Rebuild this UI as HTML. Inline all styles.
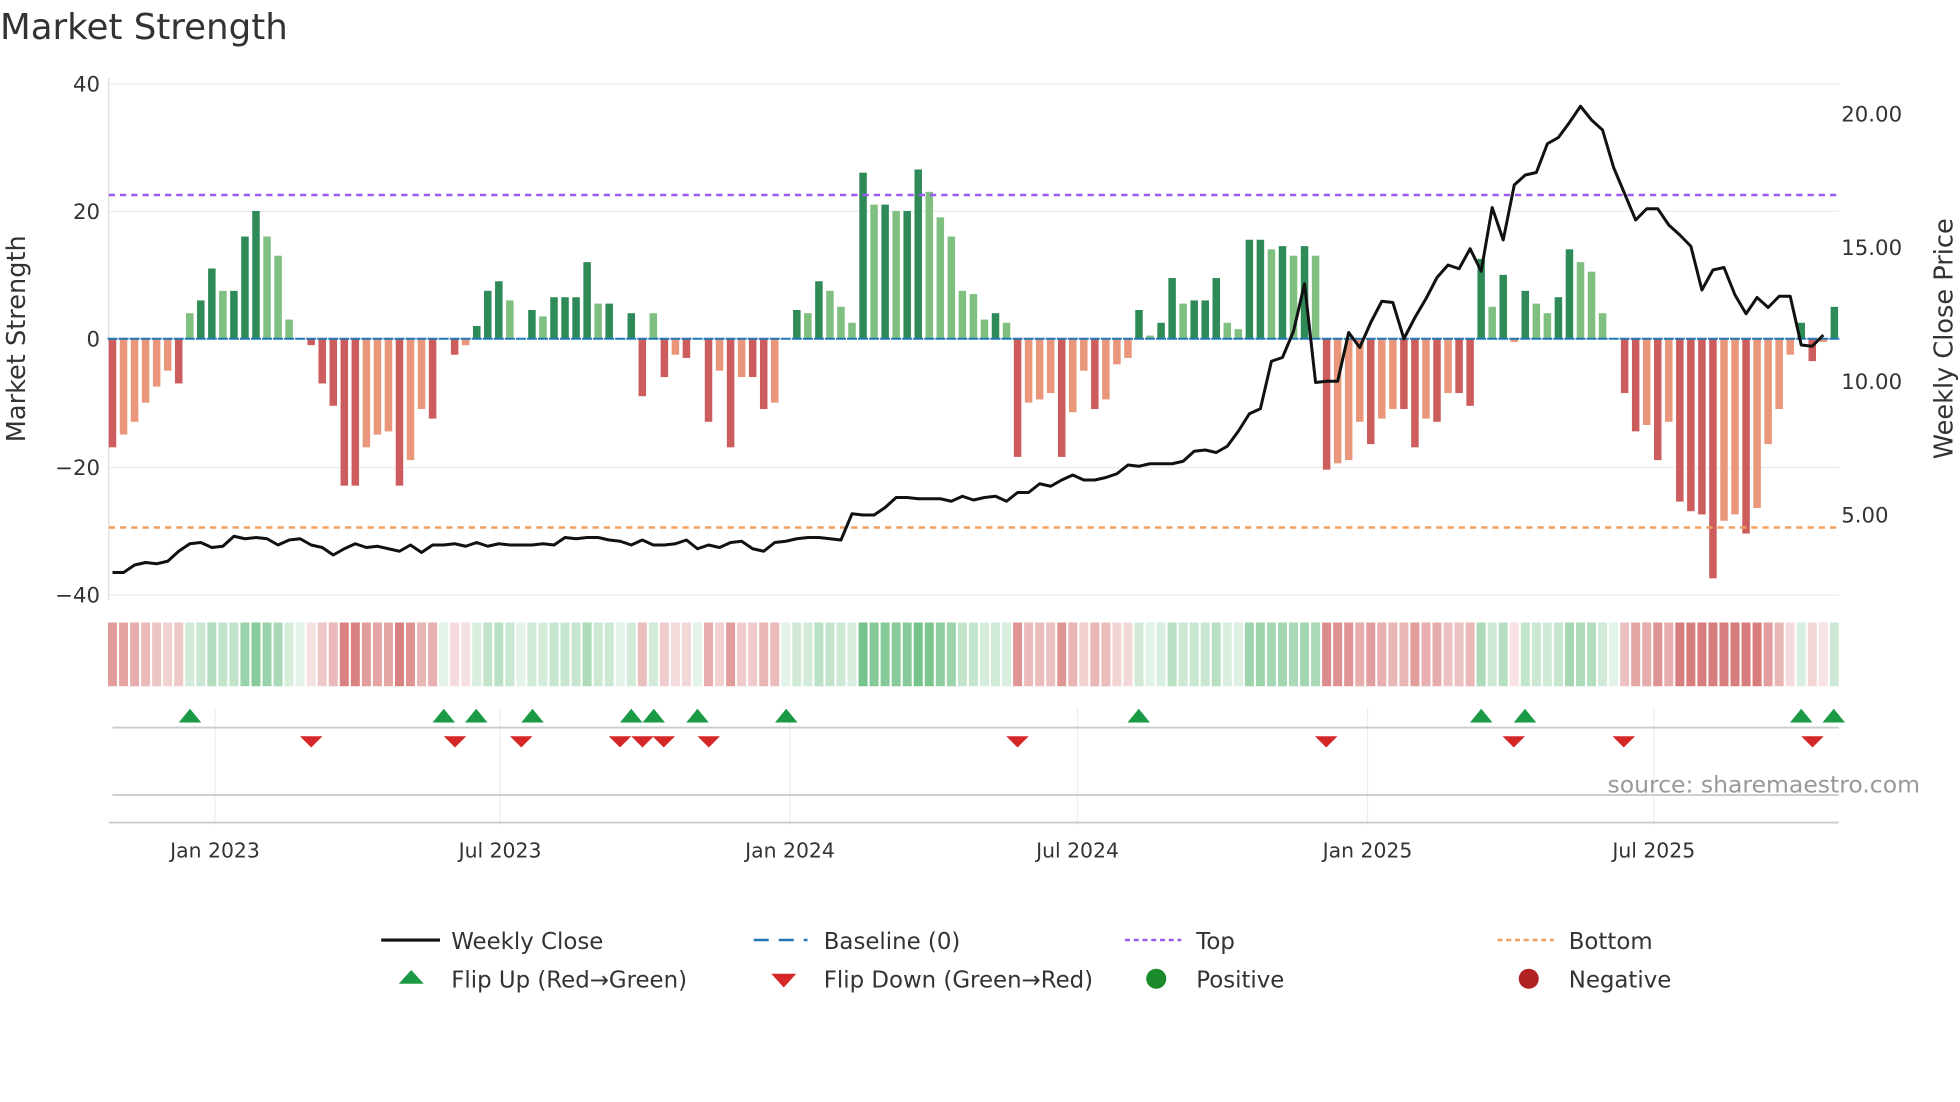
<!DOCTYPE html>
<html><head><meta charset="utf-8"><style>
html,body{margin:0;padding:0;background:#fff;width:1960px;height:1102px;overflow:hidden}
svg{display:block}
text{font-family:"DejaVu Sans","Liberation Sans",sans-serif}
</style></head><body>
<svg id="s" width="1960" height="1102" viewBox="0 0 1568 881.6" xmlns="http://www.w3.org/2000/svg">
<text x="0" y="31" font-size="28.5" fill="#333">Market Strength</text>
<g stroke="#ececec" stroke-width="1">
<line x1="87" y1="67" x2="1471" y2="67"/><line x1="87" y1="169" x2="1471" y2="169"/>
<line x1="87" y1="374" x2="1471" y2="374"/><line x1="87" y1="476" x2="1471" y2="476"/>
</g>
<line x1="87" y1="62" x2="87" y2="480" stroke="#ddd"/>
<g font-size="17" fill="#333" text-anchor="end">
<text x="80" y="73">40</text><text x="80" y="175">20</text><text x="80" y="277">0</text>
<text x="80" y="380">−20</text><text x="80" y="482">−40</text>
</g>
<g font-size="17" fill="#333">
<text x="1473" y="97">20.00</text><text x="1473" y="204">15.00</text>
<text x="1473" y="311">10.00</text><text x="1473" y="418">5.00</text>
</g>
<text transform="translate(20,271) rotate(-90)" font-size="20.5" fill="#333" text-anchor="middle">Market Strength</text>
<text transform="translate(1562,271) rotate(-90)" font-size="20.5" fill="#333" text-anchor="middle">Weekly Close Price</text>
<g id="bars"></g>
<line x1="87" y1="156" x2="1471" y2="156" stroke="#9a5cf0" stroke-width="2" stroke-dasharray="5,4"/>
<line x1="87" y1="422" x2="1471" y2="422" stroke="#f0a060" stroke-width="2" stroke-dasharray="5,4"/>
<polyline id="price" fill="none" stroke="#111" stroke-width="2.4" stroke-linejoin="round"/>
<g id="heat"></g>
<g stroke="#eee"><line x1="172" y1="566" x2="172" y2="660"/><line x1="400" y1="566" x2="400" y2="660"/><line x1="632" y1="566" x2="632" y2="660"/><line x1="862" y1="566" x2="862" y2="660"/><line x1="1094" y1="566" x2="1094" y2="660"/><line x1="1323" y1="566" x2="1323" y2="660"/></g>
<line x1="90" y1="582" x2="1471" y2="582" stroke="#ccc" stroke-width="1.5"/>
<line x1="90" y1="636" x2="1471" y2="636" stroke="#ccc" stroke-width="1.5"/>
<line x1="87" y1="658" x2="1471" y2="658" stroke="#ccc" stroke-width="1.5"/>
<g id="flips"></g>
<text x="1536" y="634" font-size="18.8" fill="#999" text-anchor="end">source: sharemaestro.com</text>
<g font-size="16.3" fill="#333" text-anchor="middle">
<text x="172" y="686">Jan 2023</text><text x="400" y="686">Jul 2023</text><text x="632" y="686">Jan 2024</text>
<text x="862" y="686">Jul 2024</text><text x="1094" y="686">Jan 2025</text><text x="1323" y="686">Jul 2025</text>
</g>
<g font-size="18.3" fill="#333">
<line x1="305" y1="752" x2="352" y2="752" stroke="#111" stroke-width="2.5"/><text x="361" y="759">Weekly Close</text>
<line x1="603" y1="752" x2="646" y2="752" stroke="#1f77b4" stroke-width="2" stroke-dasharray="12,8"/><text x="659" y="759">Baseline (0)</text>
<line x1="900" y1="752" x2="945" y2="752" stroke="#9a5cf0" stroke-width="2" stroke-dasharray="4,3"/><text x="957" y="759">Top</text>
<line x1="1198" y1="752" x2="1243" y2="752" stroke="#f0a060" stroke-width="2" stroke-dasharray="4,3"/><text x="1255" y="759">Bottom</text>
<polygon points="319,787 329,776 339,787" fill="#1a9a45"/><text x="361" y="790">Flip Up (Red→Green)</text>
<polygon points="617,779 627,790 637,779" fill="#d62728"/><text x="659" y="790">Flip Down (Green→Red)</text>
<circle cx="925" cy="783" r="8" fill="#1a8a2a"/><text x="957" y="790">Positive</text>
<circle cx="1223" cy="783" r="8" fill="#b22222"/><text x="1255" y="790">Negative</text>
</g>
</svg>
<script>
var v=[-17,-15,-13,-10,-7.5,-5,-7,4,6,11,7.5,7.5,16,20,16,13,3,0,-1,-7,-10.5,-23,-23,-17,-15,-14.5,-23,-19,-11,-12.5,0,-2.5,-1,2,7.5,9,6,0,4.5,3.5,6.5,6.5,6.5,12,5.5,5.5,0,4,-9,4,-6,-2.5,-3,0,-13,-5,-17,-6,-6,-11,-10,0,4.5,4,9,7.5,5,2.5,26,21,21,20,20,26.5,23,19,16,7.5,7,3,4,2.5,-18.5,-10,-9.5,-8.5,-18.5,-11.5,-5,-11,-9.5,-4,-3,4.5,0.5,2.5,9.5,5.5,6,6,9.5,2.5,1.5,15.5,15.5,14,14.5,13,14.5,13,-20.5,-19.5,-19,-13,-16.5,-12.5,-11,-11,-17,-12.5,-13,-8.5,-8.5,-10.5,12.5,5,10,-0.5,7.5,5.5,4,6.5,14,12,10.5,4,0,-8.5,-14.5,-13.5,-19,-13,-25.5,-27,-27.5,-37.5,-28.5,-27.5,-30.5,-26.5,-16.5,-11,-2.5,2.5,-3.5,-0.5,5];
var p=[458,458,452,450,451,449,441,435,434,438,437,429,431,430,431,436,432,431,436,438,444,439,435,438,437,439,441,436,442,436,436,435,437,434,437,435,436,436,436,435,436,430,431,430,430,432,433,436,432,436,436,435,432,439,436,438,434,433,439,441,434,433,431,430,430,431,432,411,412,412,406,398,398,399,399,399,401,397,400,398,397,401,394,394,387,389,384,380,384,384,382,379,372,373,371,371,371,369,361,360,362,357,345,331,327,289,286,265,227,306,305,305,266,278,258,241,242,271,254,239,222,212,215,199,217,166,192,148,140,138,115,110,98,85,96,104,134,155,176,167,167,180,188,197,232,216,214,236,251,238,246,237,237,276,277,268];
var NS="http://www.w3.org/2000/svg",st=8.83,x0=90,z=271,k=5.11;
function el(t,a,par){var e=document.createElementNS(NS,t);for(var q in a)e.setAttribute(q,a[q]);document.getElementById(par).appendChild(e);return e;}
var prev=0;
for(var i=0;i<v.length;i++){var x=x0+st*i,val=v[i];
 var dark=Math.abs(val)>=Math.abs(prev)-0.2;
 var c=val>=0?(dark?"#2e8b57":"#7fbf7f"):(dark?"#cd5c5c":"#e9967a");
 var h=Math.abs(val)*k;
 if(h>0.5)el("rect",{x:x-3,y:val>=0?z-h:z,width:6,height:h,fill:c},"bars");
 el("line",{x1:x-4,y1:z,x2:x+4,y2:z,stroke:"#1f77b4","stroke-width":1.6},"bars");
 var a=Math.min(1,0.2+Math.abs(val)/30);
 var hc=val>=0?"rgba(60,170,90,"+(a*0.7)+")":"rgba(200,70,70,"+(a*0.7)+")";
 var w=Math.min(7.2,1471-(x-3.6));
 el("rect",{x:x-3.6,y:498,width:w,height:51,fill:hc},"heat");
 prev=val;}
var pts=[];for(var i=0;i<p.length;i++)pts.push((x0+st*i)+","+p[i]);
document.getElementById("price").setAttribute("points",pts.join(" "));
[152,355,381,426,505,523,558,629,911,1185,1220,1441,1467].forEach(function(x){el("polygon",{points:(x-9)+",578 "+x+",567 "+(x+9)+",578",fill:"#1a9a45"},"flips");});
[249,364,417,496,514,531,567,814,1061,1211,1299,1450].forEach(function(x){el("polygon",{points:(x-9)+",589 "+x+",598 "+(x+9)+",589",fill:"#d62728"},"flips");});
</script>
</body></html>
